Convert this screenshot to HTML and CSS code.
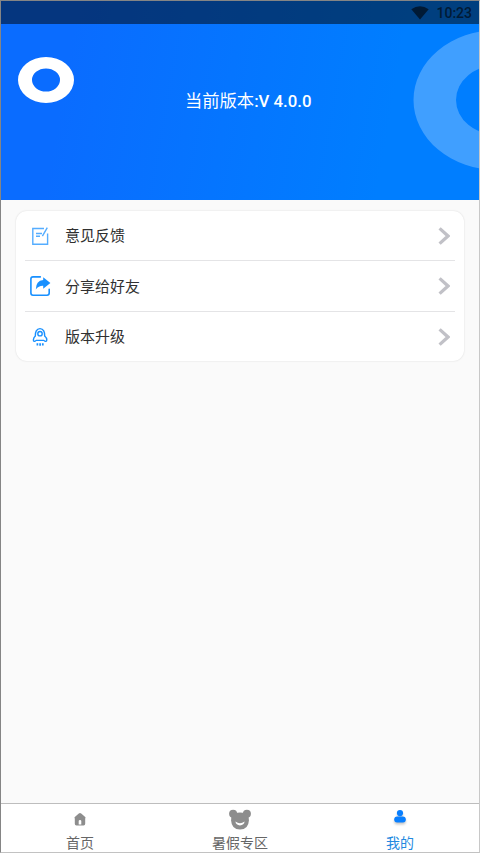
FILE: index.html
```html
<!DOCTYPE html>
<html lang="zh-CN">
<head>
<meta charset="utf-8">
<title>我的</title>
<link rel="stylesheet" href="styles.css">
</head>
<body>
<div class="screen">
  <header class="hero">
    <div class="status">
      <svg class="wifi" viewBox="0 0 18 14"><path d="M0.3 3.2Q9 -2.6 17.7 3.2L9 13.6Z"/></svg>
      <span class="time">10:23</span>
    </div>
    <div class="banner">
      <svg class="avatar" viewBox="0 0 56 46"><path fill-rule="evenodd" d="M0 23A28 23 0 0 1 56 23A28 23 0 0 1 0 23ZM14 23A14 11.5 0 0 0 42 23A14 11.5 0 0 0 14 23Z"/></svg>
      <p class="version">当前版本<span class="number">:V 4.0.0</span></p>
      <svg class="ring" viewBox="0 0 66 140"><path fill-rule="evenodd" d="M0.5 70A84 70 0 0 1 168.5 70A84 70 0 0 1 0.5 70ZM43 70A42 35 0 0 0 127 70A42 35 0 0 0 43 70Z"/></svg>
    </div>
  </header>
  <main class="content">
    <ul class="menu">
      <li class="row">
        <svg class="icon note" viewBox="0 0 24 24"><path d="M16 4.5H4.8V20.3H19.6V9.5M8 9.5H14M8 12.3H12M19.3 3.7L14.4 12.2"/></svg>
        <span class="label">意见反馈</span>
        <svg class="chevron" viewBox="0 0 12 18"><path d="M1.6 1.4L10 9L1.6 16.6"/></svg>
      </li>
      <li class="row">
        <svg class="icon share" viewBox="0 0 24 24"><path class="line" d="M12.3 2.9H5Q2.9 2.9 2.9 5V19Q2.9 21.2 5 21.2H19Q21.2 21.2 21.2 19V15.3"/><path class="fill" d="M15.2 3.2L22.4 9L15.2 14.8V11.8Q10.7 11.6 7.8 15.4Q7.9 6.8 15.2 6.1Z"/></svg>
        <span class="label">分享给好友</span>
        <svg class="chevron" viewBox="0 0 12 18"><path d="M1.6 1.4L10 9L1.6 16.6"/></svg>
      </li>
      <li class="row">
        <svg class="icon rocket" viewBox="0 0 24 24"><path d="M8 15.4H16M8 15.4C6.7 17 5.2 16.6 5.4 14.8C5.5 13.1 6.3 12 7.3 11.1C7.2 7.3 8.4 3.6 12 3.6S16.8 7.3 16.7 11.1C17.7 12 18.7 13.1 18.8 14.8C18.9 16.6 17.3 17 16 15.4"/><circle cx="12" cy="8.7" r="2.2"/><path class="flame" d="M9.4 18.2V20.4M12.1 18.2V20.8M14.8 18.2V20.4"/></svg>
        <span class="label">版本升级</span>
        <svg class="chevron" viewBox="0 0 12 18"><path d="M1.6 1.4L10 9L1.6 16.6"/></svg>
      </li>
    </ul>
  </main>
  <nav class="tabs">
    <a class="tab">
      <svg class="tab-icon" viewBox="0 0 24 24"><path fill-rule="evenodd" d="M12 6Q12.6 6 13.2 6.6L17.2 10.1Q18 11 17.2 11.5V16.8Q17.2 18.4 15.6 18.4H8.4Q6.8 18.4 6.8 16.8V11.5Q6 11 6.8 10.1L10.8 6.6Q11.4 6 12 6ZM10.7 17.6H13.3V14Q13.3 13.1 12 13.1T10.7 14Z"/></svg>
      <span>首页</span>
    </a>
    <a class="tab">
      <svg class="tab-icon" viewBox="0 0 24 24"><circle cx="5.1" cy="6.8" r="4"/><circle cx="18.9" cy="6.8" r="4"/><path d="M3.5 8Q6 5.4 12 5.4T20.5 8L20.9 13.5Q20.4 22.4 12 22.6Q3.6 22.4 3.1 13.5Z"/><path class="smile" d="M7.4 14.6Q8 18.4 12 18.4T16.6 14.6Q12 17.8 7.4 14.6Z"/></svg>
      <span>暑假专区</span>
    </a>
    <a class="tab active">
      <svg class="tab-icon" viewBox="0 0 24 24"><circle cx="12" cy="6.1" r="3.1"/><rect x="6.2" y="9.5" width="11.6" height="5.9" rx="2.9"/></svg>
      <span>我的</span>
    </a>
  </nav>
</div>
</body>
</html>
```
FILE: styles.css
```css
* { box-sizing: border-box; }

body {
  margin: 0;
  font-family: Roboto, "Noto Sans CJK SC", sans-serif;
}

.screen {
  display: flex;
  flex-direction: column;
  height: 853px;
  overflow: hidden;
  background: #fafafa;
  border: 1px solid #858585;
  border-right-color: #c8c8c8;
  border-bottom-color: #c2c2c2;
}

.hero {
  display: flex;
  flex-direction: column;
  height: 199px;
  background: linear-gradient(100deg, #0a6cff 15%, #007eff 80%);
}

.status {
  display: flex;
  align-items: center;
  justify-content: flex-end;
  gap: 7px;
  height: 23px;
  padding-right: 7px;
  background: rgba(0, 0, 0, 0.5);
}

.wifi {
  width: 18px;
  height: 14px;
  fill: #001a35;
}

.time {
  font-size: 14px;
  font-weight: 500;
  line-height: 24px;
  color: #001a35;
}

.banner {
  display: grid;
  grid-template-columns: 56px 1fr 66px;
  height: 176px;
  padding-left: 17px;
}

.avatar {
  width: 56px;
  height: 46px;
  margin-top: 33px;
  fill: #fff;
}

.version {
  margin: 64px 0 0 111px;
  font-size: 17.3px;
  font-weight: 400;
  line-height: 26px;
  color: #fff;
}

.number {
  font-size: 16.8px;
  font-weight: 500;
}

.ring {
  width: 66px;
  height: 140px;
  margin-top: 6px;
  fill: #409fff;
}

.content {
  flex: 1;
  padding: 11px 15px;
}

.menu {
  margin: 0;
  padding: 0 9px;
  height: 150px;
  list-style: none;
  background: #fff;
  border-radius: 11px;
  box-shadow: 0 0 2px rgba(0, 0, 0, 0.14);
}

.row {
  display: flex;
  align-items: center;
  height: 51px;
  padding: 0 5px 0 3px;
  border-bottom: 1px solid #e4e4e6;
}

.row:first-child { height: 50px; }

.row:last-child {
  height: 49px;
  border-bottom: 0;
}

.icon {
  width: 24px;
  height: 24px;
  fill: none;
  stroke: #1890ff;
  stroke-width: 1.4;
}

.note { stroke: #55adff; }

.share .line {
  stroke-width: 1.6;
  stroke-linecap: round;
}

.share .fill {
  fill: #1890ff;
  stroke: none;
}

.rocket .flame { stroke-width: 1.7; }

.label {
  flex: 1;
  padding: 1px 0 0 13px;
  font-size: 15px;
  line-height: 22px;
  color: #303030;
}

.chevron {
  width: 12px;
  height: 18px;
  fill: none;
  stroke: #c1c1c7;
  stroke-width: 3.3;
}

.tabs {
  display: grid;
  grid-template-columns: 158px 162px 158px;
  height: 49px;
  background: #fff;
  border-top: 1px solid #bdbdbd;
}

.tab {
  display: flex;
  flex-direction: column;
  align-items: center;
  padding-top: 3px;
  font-size: 14px;
  line-height: 24px;
  color: #666;
}

.tab-icon {
  width: 24px;
  height: 24px;
  fill: #8d8d8d;
}

.tab .smile { fill: #fff; }

.active { color: #2289e0; }

.active .tab-icon {
  fill: #087fff;
  filter: drop-shadow(0 2px 1px rgba(0, 0, 0, 0.22));
}
```
